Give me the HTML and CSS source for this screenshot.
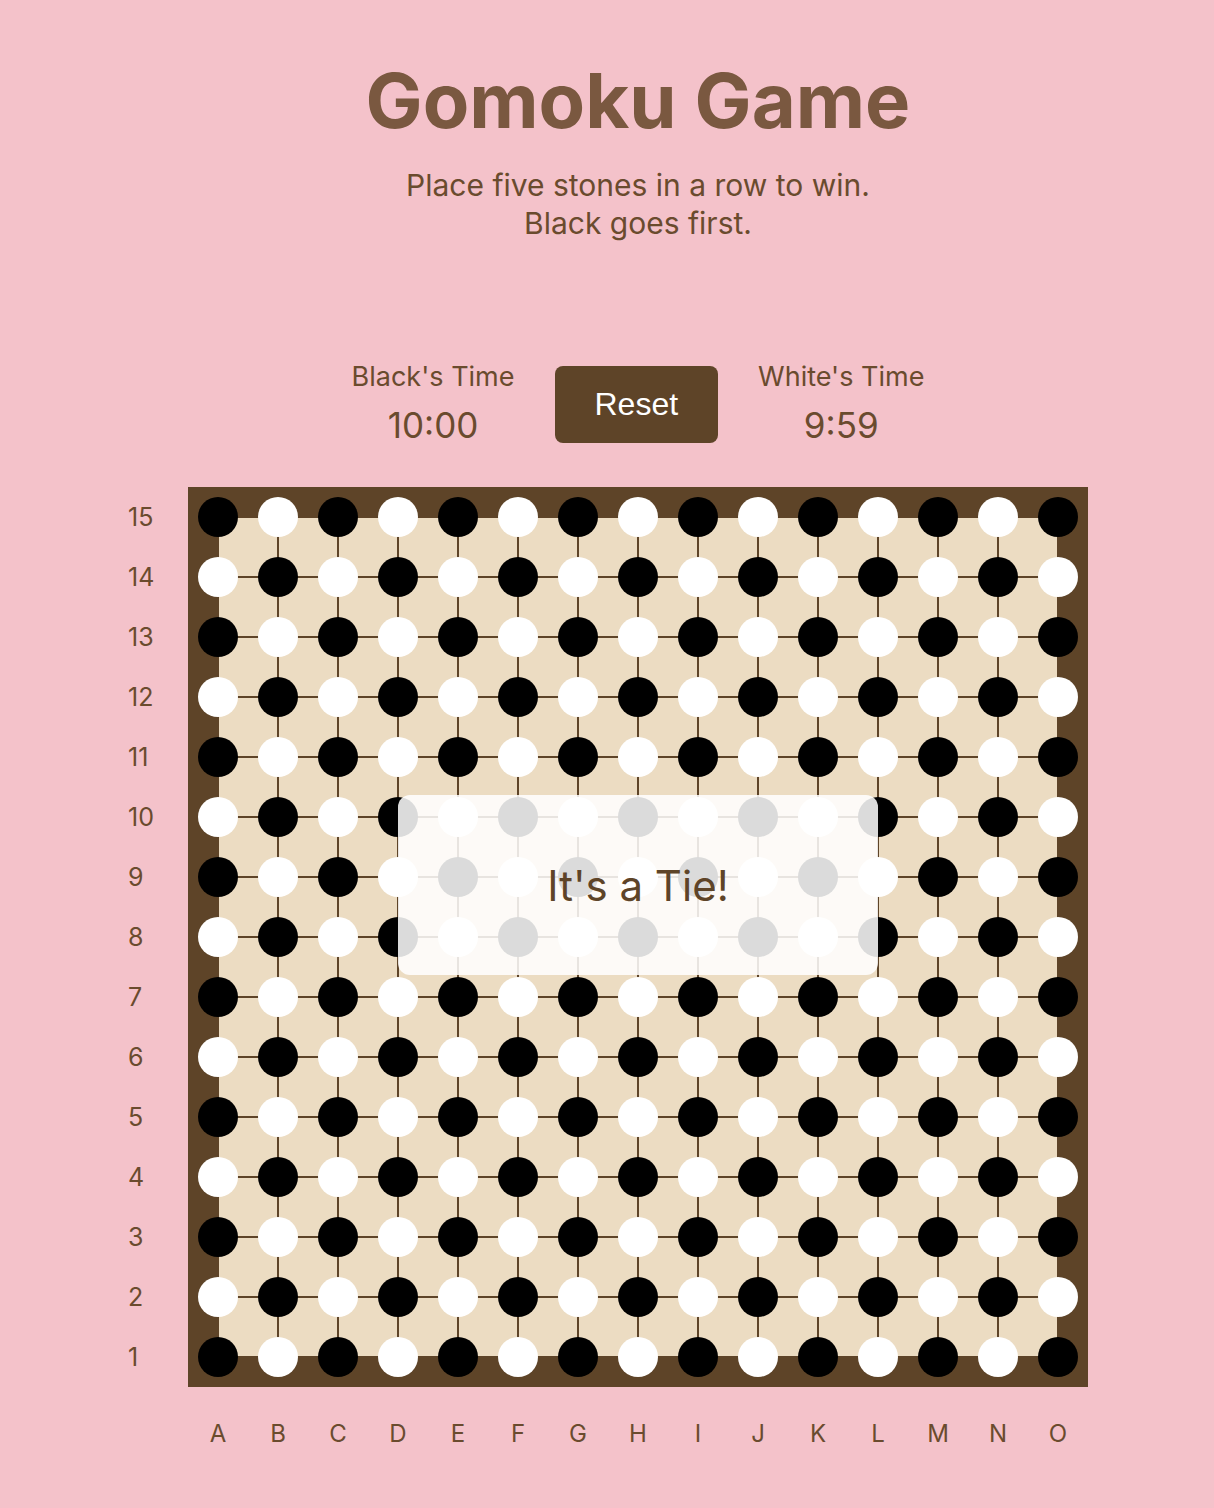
FILE: index.html
```html
<!DOCTYPE html>
<html lang="en">
<head>
<meta charset="utf-8">
<title>Gomoku Game</title>
<link rel="stylesheet" href="styles.css">
</head>
<body>
<div class="page">
  <header class="header">
    <h1 class="title">Gomoku Game</h1>
    <p class="subtitle">Place five stones in a row to win.<br>Black goes first.</p>
  </header>
  <div class="controls">
    <div class="timer">
      <div class="timer-label">Black's Time</div>
      <div class="timer-value">10:00</div>
    </div>
    <button class="reset">Reset</button>
    <div class="timer">
      <div class="timer-label">White's Time</div>
      <div class="timer-value">9:59</div>
    </div>
  </div>
  <div class="board-row">
    <div class="row-labels">
      <span>15</span><span>14</span><span>13</span><span>12</span><span>11</span><span>10</span><span>9</span><span>8</span><span>7</span><span>6</span><span>5</span><span>4</span><span>3</span><span>2</span><span>1</span>
    </div>
    <div class="board">
      <div class="grid"></div>
      <div class="stones">
        <i class="b"></i><i class="w"></i><i class="b"></i><i class="w"></i><i class="b"></i><i class="w"></i><i class="b"></i><i class="w"></i><i class="b"></i><i class="w"></i><i class="b"></i><i class="w"></i><i class="b"></i><i class="w"></i><i class="b"></i>
        <i class="w"></i><i class="b"></i><i class="w"></i><i class="b"></i><i class="w"></i><i class="b"></i><i class="w"></i><i class="b"></i><i class="w"></i><i class="b"></i><i class="w"></i><i class="b"></i><i class="w"></i><i class="b"></i><i class="w"></i>
        <i class="b"></i><i class="w"></i><i class="b"></i><i class="w"></i><i class="b"></i><i class="w"></i><i class="b"></i><i class="w"></i><i class="b"></i><i class="w"></i><i class="b"></i><i class="w"></i><i class="b"></i><i class="w"></i><i class="b"></i>
        <i class="w"></i><i class="b"></i><i class="w"></i><i class="b"></i><i class="w"></i><i class="b"></i><i class="w"></i><i class="b"></i><i class="w"></i><i class="b"></i><i class="w"></i><i class="b"></i><i class="w"></i><i class="b"></i><i class="w"></i>
        <i class="b"></i><i class="w"></i><i class="b"></i><i class="w"></i><i class="b"></i><i class="w"></i><i class="b"></i><i class="w"></i><i class="b"></i><i class="w"></i><i class="b"></i><i class="w"></i><i class="b"></i><i class="w"></i><i class="b"></i>
        <i class="w"></i><i class="b"></i><i class="w"></i><i class="b"></i><i class="w"></i><i class="b"></i><i class="w"></i><i class="b"></i><i class="w"></i><i class="b"></i><i class="w"></i><i class="b"></i><i class="w"></i><i class="b"></i><i class="w"></i>
        <i class="b"></i><i class="w"></i><i class="b"></i><i class="w"></i><i class="b"></i><i class="w"></i><i class="b"></i><i class="w"></i><i class="b"></i><i class="w"></i><i class="b"></i><i class="w"></i><i class="b"></i><i class="w"></i><i class="b"></i>
        <i class="w"></i><i class="b"></i><i class="w"></i><i class="b"></i><i class="w"></i><i class="b"></i><i class="w"></i><i class="b"></i><i class="w"></i><i class="b"></i><i class="w"></i><i class="b"></i><i class="w"></i><i class="b"></i><i class="w"></i>
        <i class="b"></i><i class="w"></i><i class="b"></i><i class="w"></i><i class="b"></i><i class="w"></i><i class="b"></i><i class="w"></i><i class="b"></i><i class="w"></i><i class="b"></i><i class="w"></i><i class="b"></i><i class="w"></i><i class="b"></i>
        <i class="w"></i><i class="b"></i><i class="w"></i><i class="b"></i><i class="w"></i><i class="b"></i><i class="w"></i><i class="b"></i><i class="w"></i><i class="b"></i><i class="w"></i><i class="b"></i><i class="w"></i><i class="b"></i><i class="w"></i>
        <i class="b"></i><i class="w"></i><i class="b"></i><i class="w"></i><i class="b"></i><i class="w"></i><i class="b"></i><i class="w"></i><i class="b"></i><i class="w"></i><i class="b"></i><i class="w"></i><i class="b"></i><i class="w"></i><i class="b"></i>
        <i class="w"></i><i class="b"></i><i class="w"></i><i class="b"></i><i class="w"></i><i class="b"></i><i class="w"></i><i class="b"></i><i class="w"></i><i class="b"></i><i class="w"></i><i class="b"></i><i class="w"></i><i class="b"></i><i class="w"></i>
        <i class="b"></i><i class="w"></i><i class="b"></i><i class="w"></i><i class="b"></i><i class="w"></i><i class="b"></i><i class="w"></i><i class="b"></i><i class="w"></i><i class="b"></i><i class="w"></i><i class="b"></i><i class="w"></i><i class="b"></i>
        <i class="w"></i><i class="b"></i><i class="w"></i><i class="b"></i><i class="w"></i><i class="b"></i><i class="w"></i><i class="b"></i><i class="w"></i><i class="b"></i><i class="w"></i><i class="b"></i><i class="w"></i><i class="b"></i><i class="w"></i>
        <i class="b"></i><i class="w"></i><i class="b"></i><i class="w"></i><i class="b"></i><i class="w"></i><i class="b"></i><i class="w"></i><i class="b"></i><i class="w"></i><i class="b"></i><i class="w"></i><i class="b"></i><i class="w"></i><i class="b"></i>
      </div>
      <div class="result">It's a Tie!</div>
    </div>
  </div>
  <div class="col-labels">
    <span>A</span><span>B</span><span>C</span><span>D</span><span>E</span><span>F</span><span>G</span><span>H</span><span>I</span><span>J</span><span>K</span><span>L</span><span>M</span><span>N</span><span>O</span>
  </div>
</div>
</body>
</html>
```

FILE: styles.css
```css
html, body {
  margin: 0;
  padding: 0;
}

body {
  background: #f4c2ca;
  font-family: Inter, "Noto Sans", sans-serif;
  color: #654a2f;
}

.page {
  width: 960px;
  margin: 0 auto;
  padding-left: 2px;
  display: flex;
  flex-direction: column;
}

.header {
  margin-left: 60px;
  text-align: center;
}

.title {
  margin: 54px 0 0;
  font-size: 76px;
  line-height: 92px;
  font-weight: 700;
  color: #7a5840;
}

.subtitle {
  margin: 20px 0 0;
  font-size: 30px;
  line-height: 38px;
  color: #6a4b2e;
}

.controls {
  margin: 119px 0 0 60px;
  display: flex;
  justify-content: center;
  align-items: center;
  gap: 40px;
}

.timer {
  display: flex;
  flex-direction: column;
  align-items: center;
}

.timer-label {
  font-size: 27px;
  line-height: 31px;
  color: #6a4b2e;
}

.timer-value {
  margin-top: 11px;
  font-size: 35px;
  line-height: 44px;
  color: #6a4b2e;
}

.reset {
  font-family: "Liberation Sans", Arial, sans-serif;
  font-size: 32px;
  line-height: 37px;
  color: #ffffff;
  background: #5e4428;
  border: none;
  border-radius: 8px;
  padding: 20px 40px;
}

.board-row {
  margin-top: 40px;
  display: flex;
}

.row-labels {
  width: 60px;
  display: flex;
  flex-direction: column;
}

.row-labels span {
  height: 60px;
  display: flex;
  align-items: center;
  font-size: 25px;
  color: #6a4b2e;
}

.board {
  position: relative;
  width: 900px;
  height: 900px;
  box-sizing: border-box;
  padding: 30px;
  background: #5e4428;
}

.grid {
  width: 840px;
  height: 840px;
  background-color: #ecdcc2;
  background-image:
    linear-gradient(to right, #5e4428 2px, transparent 2px),
    linear-gradient(to bottom, #5e4428 2px, transparent 2px);
  background-size: 60px 60px;
  background-position: -1px 0, 0 -1px;
}

.stones {
  position: absolute;
  inset: 0;
  display: grid;
  grid-template-columns: repeat(15, 60px);
  grid-template-rows: repeat(15, 60px);
}

.stones i {
  display: block;
  width: 40px;
  height: 40px;
  margin: 10px;
  border-radius: 50%;
}

.stones .b { background: #000000; }
.stones .w { background: #ffffff; }

.result {
  position: absolute;
  left: 210px;
  top: 308px;
  width: 480px;
  height: 180px;
  border-radius: 12px;
  background: rgba(255, 255, 255, 0.86);
  display: flex;
  align-items: center;
  justify-content: center;
  font-size: 42px;
  color: #5e4428;
}

.col-labels {
  margin: 32px 0 0 60px;
  display: grid;
  grid-template-columns: repeat(15, 60px);
  padding-bottom: 40px;
}

.col-labels span {
  text-align: center;
  font-size: 24px;
  line-height: 29px;
  color: #6a4b2e;
}
```
